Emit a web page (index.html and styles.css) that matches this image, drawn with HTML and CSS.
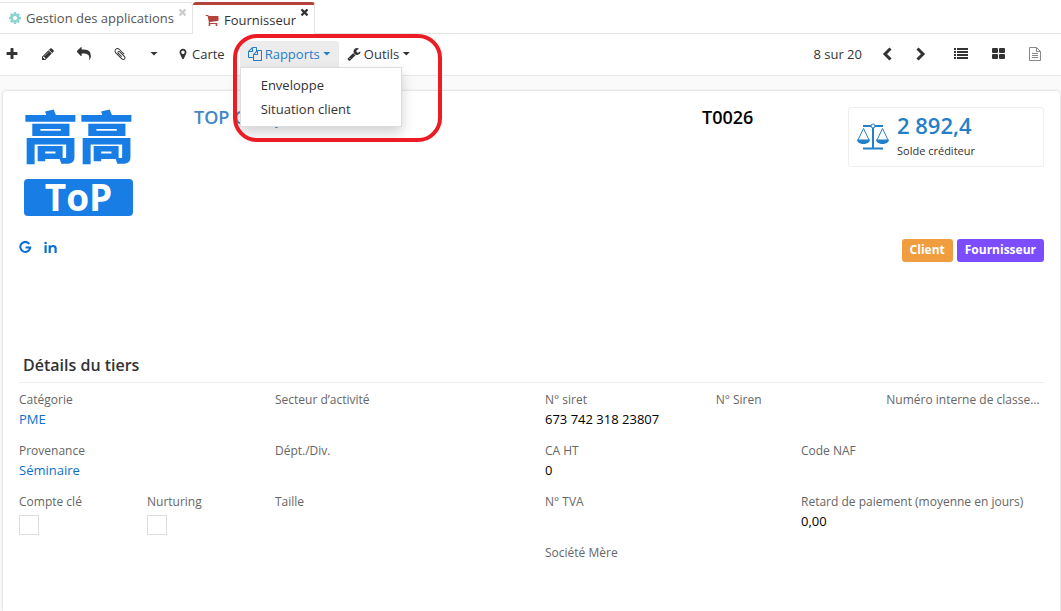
FILE: index.html
```html
<!DOCTYPE html>
<html lang="fr">
<head>
<meta charset="utf-8">
<title>Fournisseur</title>
<link rel="stylesheet" href="styles.css">
</head>
<body>
<svg class="sprite" aria-hidden="true">
  <symbol id="i-cog" viewBox="0 0 1792 1792"><path d="M1152 896q0-106-75-181t-181-75-181 75-75 181 75 181 181 75 181-75 75-181zm512-109v222q0 12-8 23t-20 13l-185 28q-19 54-39 91 35 50 107 138 10 12 10 25t-9 23q-27 37-99 108t-94 71q-12 0-26-9l-138-108q-44 23-91 38-16 136-29 186-7 28-36 28h-222q-14 0-24.500-8.500t-11.500-21.500l-28-184q-49-16-90-37l-141 107q-10 9-25 9-14 0-25-11-126-114-165-168-7-10-7-23 0-12 8-23 15-21 51-66.500t54-70.500q-27-50-41-99l-183-27q-13-2-21-12.500t-8-23.500v-222q0-12 8-23t19-13l186-28q14-46 39-92-40-57-107-138-10-12-10-24 0-10 9-23 26-36 98.500-107.500t94.500-71.500q13 0 26 10l138 107q44-23 91-38 16-136 29-186 7-28 36-28h222q14 0 24.500 8.500t11.500 21.500l28 184q49 16 90 37l142-107q9-9 24-9 13 0 25 10 129 119 165 170 7 8 7 22 0 12-8 23-15 21-51 66.500t-54 70.500q26 50 41 98l183 28q13 2 21 12.500t8 23.500z"/></symbol>
  <symbol id="i-cart" viewBox="0 0 1792 1792"><path d="M704 1536q0 52-38 90t-90 38-90-38-38-90 38-90 90-38 90 38 38 90zm896 0q0 52-38 90t-90 38-90-38-38-90 38-90 90-38 90 38 38 90zm128-1088v512q0 24-16.500 42.500t-40.500 21.500l-1044 122q13 60 13 70 0 16-24 64h920q26 0 45 19t19 45-19 45-45 19h-1024q-26 0-45-19t-19-45q0-11 8-31.500t16-36 21.500-40 15.500-29.500l-177-823h-204q-26 0-45-19t-19-45 19-45 45-19h256q16 0 28.500 6.500t19.500 15.500 13 24.500 8 26 5.500 29.500 4.500 26h1201q26 0 45 19t19 45z"/></symbol>
  <symbol id="i-times" viewBox="0 0 1792 1792"><path d="M1490 1322q0 40-28 68l-136 136q-28 28-68 28t-68-28l-294-294-294 294q-28 28-68 28t-68-28l-136-136q-28-28-28-68t28-68l294-294-294-294q-28-28-28-68t28-68l136-136q28-28 68-28t68 28l294 294 294-294q28-28 68-28t68 28l136 136q28 28 28 68t-28 68l-294 294 294 294q28 28 28 68z"/></symbol>
  <symbol id="i-plus" viewBox="0 0 1792 1792"><path d="M1600 736v192q0 40-28 68t-68 28h-416v416q0 40-28 68t-68 28h-192q-40 0-68-28t-28-68v-416h-416q-40 0-68-28t-28-68v-192q0-40 28-68t68-28h416v-416q0-40 28-68t68-28h192q40 0 68 28t28 68v416h416q40 0 68 28t28 68z"/></symbol>
  <symbol id="i-pencil" viewBox="0 0 1792 1792"><path d="M491 1536l91-91-235-235-91 91v107h128v128h107zm523-928q0-22-22-22-10 0-17 7l-542 542q-7 7-7 17 0 22 22 22 10 0 17-7l542-542q7-7 7-17zm-54-192l416 416-832 832h-416v-416zm683 96q0 53-37 90l-166 166-416-416 166-165q36-38 90-38 53 0 91 38l235 234q37 39 37 91z"/></symbol>
  <symbol id="i-reply" viewBox="0 0 1792 1792"><path d="M1792 1120q0 166-127 451-3 7-10.500 24t-13.500 30-13 22q-12 17-28 17-15 0-23.500-10t-8.500-25q0-9 2.500-26.500t2.500-23.500q5-68 5-123 0-112-19.500-200.500t-54-153.500-89-112-116-77-143.500-48-161-22.500-180-6.500h-224v256q0 26-19 45t-45 19-45-19l-512-512q-19-19-19-45t19-45l512-512q19-19 45-19t45 19 19 45v256h224q713 0 875 403 53 134 53 333z"/></symbol>
  <symbol id="i-clip" viewBox="0 0 1792 1792"><path d="M1596 1385q0 117-79 196t-196 79q-135 0-235-100l-777-776q-113-115-113-271 0-159 110-270t269-111q158 0 273 113l605 606q10 10 10 22 0 16-30.500 46.500t-46.500 30.500q-13 0-23-10l-606-607q-79-77-181-77-106 0-179 75t-73 181q0 105 76 181l776 777q63 63 145 63 64 0 106-42t42-106q0-82-63-145l-581-581q-26-24-60-24-29 0-48 19t-19 48q0 32 25 59l410 410q10 10 10 22 0 16-31 47t-47 31q-12 0-22-10l-410-410q-63-61-63-149 0-82 57-139t139-57q88 0 149 63l581 581q100 98 100 235z"/></symbol>
  <symbol id="i-marker" viewBox="0 0 1792 1792"><path d="M1152 640q0-106-75-181t-181-75-181 75-75 181 75 181 181 75 181-75 75-181zm256 0q0 109-33 179l-364 774q-16 33-47.500 52t-67.500 19-67.500-19-46.500-52l-365-774q-33-70-33-179 0-212 150-362t362-150 362 150 150 362z"/></symbol>
  <symbol id="i-files" viewBox="0 0 1792 1792"><path d="M1696 384q40 0 68 28t28 68v1216q0 40-28 68t-68 28h-960q-40 0-68-28t-28-68v-288h-544q-40 0-68-28t-28-68v-672q0-40 20-88t48-76l408-408q28-28 76-48t88-20h416q40 0 68 28t28 68v328q68-40 128-40h416zm-544 213l-299 299h299v-299zm-640-384l-299 299h299v-299zm196 647l316-316v-416h-384v416q0 40-28 68t-68 28h-416v640h512v-256q0-40 20-88t48-76zm956 804v-1152h-384v416q0 40-28 68t-68 28h-416v640h896z"/></symbol>
  <symbol id="i-wrench" viewBox="0 0 1792 1792"><path d="M448 1472q0-26-19-45t-45-19-45 19-19 45 19 45 45 19 45-19 19-45zm644-420l-682 682q-37 37-90 37-52 0-91-37l-106-108q-38-36-38-90 0-53 38-91l681-681q39 98 114.500 173.500t173.500 114.500zm634-435q0 39-23 106-47 134-164.500 217.500t-258.500 83.500q-185 0-316.500-131.500t-131.500-316.500 131.500-316.500 316.500-131.500q58 0 121.500 16.500t107.500 46.500q16 11 16 28t-16 28l-293 169v224l193 107q5-3 79-48.500t135.500-81 70.500-35.500q15 0 23.500 10t8.500 25z"/></symbol>
</svg>

<nav class="tabs">
  <div class="tab">
    <svg class="icon cog"><use href="#i-cog"/></svg>
    <a class="tab-link" href="#apps">Gestion des applications</a>
    <button class="tab-close" aria-label="Fermer Gestion des applications"><svg><use href="#i-times"/></svg></button>
  </div>
  <div class="tab active">
    <svg class="icon cart"><use href="#i-cart"/></svg>
    <a class="tab-link" href="#supplier">Fournisseur</a>
    <button class="tab-close" aria-label="Fermer Fournisseur"><svg><use href="#i-times"/></svg></button>
  </div>
</nav>

<header class="toolbar">
  <div class="tools">
    <button class="tool" aria-label="Nouveau"><svg class="icon"><use href="#i-plus"/></svg></button>
    <button class="tool" aria-label="Modifier"><svg class="icon"><use href="#i-pencil"/></svg></button>
    <button class="tool" aria-label="Retour"><svg class="icon"><use href="#i-reply"/></svg></button>
    <button class="tool" aria-label="Pièces jointes"><svg class="icon"><use href="#i-clip"/></svg></button>
    <button class="tool" aria-label="Plus"><span class="caret"></span></button>
  </div>
  <div class="actions">
    <button class="action"><svg class="icon marker"><use href="#i-marker"/></svg>Carte</button>
    <div class="dropdown">
      <button class="action open" aria-expanded="true"><svg class="icon"><use href="#i-files"/></svg>Rapports<span class="caret"></span></button>
      <div class="menu">
        <a href="#enveloppe">Enveloppe</a>
        <a href="#situation">Situation client</a>
      </div>
      <div class="highlight"></div>
    </div>
    <button class="action"><svg class="icon"><use href="#i-wrench"/></svg>Outils<span class="caret"></span></button>
  </div>
  <div class="pager">
    <span class="count">8 sur 20</span>
    <button class="nav" aria-label="Précédent"><svg width="14" height="14" viewBox="0 0 14 14"><path class="chevron" d="M9.500 1.500 4 7l5.500 5.500"/></svg></button>
    <button class="nav" aria-label="Suivant"><svg width="14" height="14" viewBox="0 0 14 14"><path class="chevron" d="M3.500 1.500 9 7l-5.500 5.500"/></svg></button>
  </div>
  <div class="views">
    <button class="nav" aria-label="Liste"><svg width="14" height="14" viewBox="0 0 14 14"><path d="M0 1h2v2H0zM3 1h11v2H3zM0 4h2v2H0zM3 4h11v2H3zM0 7h2v2H0zM3 7h11v2H3zM0 10h2v2H0zM3 10h11v2H3z"/></svg></button>
    <button class="nav" aria-label="Cartes"><svg width="14" height="14" viewBox="0 0 14 14"><rect x="1" y="1" width="6" height="5" rx="1"/><rect x="8" y="1" width="6" height="5" rx="1"/><rect x="1" y="7" width="6" height="5" rx="1"/><rect x="8" y="7" width="6" height="5" rx="1"/></svg></button>
    <button class="nav muted" aria-label="Formulaire"><svg width="14" height="14" viewBox="0 0 14 14"><path class="line" d="M1.500.5h7l4 4v9h-11zM8.500.5v4h4M4 6.500h6M4 8.500h6M4 10.500h6"/></svg></button>
  </div>
</header>

<main class="page">
  <section class="sheet">
    <div class="summary">
      <div class="logo">
        <div class="logo-han" lang="zh">高高</div>
        <div class="logo-top">ToP</div>
      </div>
      <a class="company" href="#company">TOP Comp</a>
      <div class="code">T0026</div>
      <div class="balance">
        <svg class="scales" viewBox="0 0 32 28"><path class="thin" d="M6.500 5.500 1 17M6.500 5.500 12 17M25.500 5.500 20 17M25.500 5.500 31 17"/><path class="beam" d="M6 3h20M16 4v21M6 25.500h20"/><circle class="pivot" cx="16" cy="3" r="2"/><path d="M0 16.500h13c0 6-13 6-13 0zM19 16.500h13c0 6-13 6-13 0z"/></svg>
        <div>
          <div class="amount">2 892,4</div>
          <div class="caption">Solde créditeur</div>
        </div>
      </div>
    </div>
    <div class="meta">
      <div class="social">
        <a href="#google" aria-label="Google"><svg width="13" height="13" viewBox="0 0 13 13"><path class="google" d="M10.300 2.900A5 5 0 1 0 11.300 6.400H6.500"/></svg></a>
        <a href="#linkedin" aria-label="LinkedIn"><svg width="13" height="13" viewBox="0 0 13 13"><circle cx="1.600" cy="2" r="1.300"/><path d="M.5 4.300h2.200V12H.5zM4.600 4.300h2.100v1c1.300-2 6-1.700 6 2V12h-2.200V8c0-2.700-3.700-2.500-3.700 0v4H4.600z"/></svg></a>
      </div>
      <div class="tags"><span class="tag orange">Client</span><span class="tag violet">Fournisseur</span></div>
    </div>
    <h2>Détails du tiers</h2>
    <div class="details">
      <div class="fields left">
        <div class="field half"><span>Catégorie</span><a href="#pme">PME</a></div>
        <div class="field half"><span>Secteur d’activité</span></div>
        <div class="field half"><span>Provenance</span><a href="#seminaire">Séminaire</a></div>
        <div class="field half"><span>Dépt./Div.</span></div>
        <div class="field"><label for="key">Compte clé</label><input type="checkbox" id="key"></div>
        <div class="field"><label for="nurturing">Nurturing</label><input type="checkbox" id="nurturing"></div>
        <div class="field half"><span>Taille</span></div>
      </div>
      <div class="fields right">
        <div class="field third"><span>N° siret</span><b>673 742 318 23807</b></div>
        <div class="field third"><span>N° Siren</span></div>
        <div class="field third"><span>Numéro interne de classement</span></div>
        <div class="field half"><span>CA HT</span><b>0</b></div>
        <div class="field half"><span>Code NAF</span></div>
        <div class="field half"><span>N° TVA</span></div>
        <div class="field half"><span>Retard de paiement (moyenne en jours)</span><b>0,00</b></div>
        <div class="field half"><span>Société Mère</span></div>
      </div>
    </div>
  </section>
</main>
</body>
</html>
```
FILE: styles.css
```css
* { box-sizing: border-box; }
body {
  margin: 0;
  min-height: 100vh;
  display: flex;
  flex-direction: column;
  background: #fafafa;
  color: #333;
  font: 13px/20px "Open Sans", "Noto Sans", sans-serif;
}
a { color: #0a6fd0; text-decoration: none; }
button { margin: 0; padding: 0; border: 0; background: none; color: inherit; font: inherit; }
svg { display: block; fill: currentColor; }
.sprite { position: absolute; width: 0; height: 0; }
.icon { width: 14px; height: 14px; flex: none; }

.tabs {
  display: flex;
  align-items: flex-end;
  height: 34px;
  background: #fff;
  border-bottom: 1px solid #e4e4e4;
}
.tab {
  display: flex;
  align-items: center;
  height: 31px;
  padding: 0 4px 0 8px;
  border: solid #e4e4e4;
  border-width: 1px 1px 0 0;
  border-radius: 0 3px 0 0;
}
.tab-link { margin: 0 3px 0 4px; color: #555; }
.tab.active {
  height: 32px;
  margin-bottom: -1px;
  padding-left: 12px;
  background: #fff;
  border-top: 3px solid #b5433b;
  border-radius: 3px 3px 0 0;
}
.active .tab-link { margin-left: 5px; color: #333; }
.tab-close { align-self: flex-start; padding-top: 2px; color: #ccc; }
.active .tab-close { padding-top: 0; color: #333; }
.tab-close svg { width: 11px; height: 14px; }
.cog { color: #8dd3cf; }
.cart { color: #b5433b; }

.toolbar {
  display: flex;
  align-items: center;
  height: 42px;
  padding: 0 19px 2px 5px;
  background: #fff;
  border-bottom: 1px solid #e8e8e8;
}
.tools { display: flex; gap: 22px; }
.tool { display: flex; align-items: center; justify-content: center; min-width: 14px; height: 26px; }
.tool:last-child { min-width: 10px; }
.caret {
  width: 8px;
  height: 4px;
  background: currentColor;
  clip-path: polygon(0 0, 100% 0, 50% 100%);
}
.actions { display: flex; margin-left: 10px; }
.action { display: flex; align-items: center; gap: 3px; height: 26px; padding: 0 8px; }
.marker { width: 12px; }
.open { background: #ececec; color: #237fc8; border-radius: 3px 3px 0 0; }
.dropdown { position: relative; margin-left: 7px; }
.menu {
  position: absolute;
  z-index: 2;
  top: 100%;
  left: 0;
  width: 162px;
  padding: 5px 0;
  background: #fff;
  border: 1px solid #ddd;
  box-shadow: 0 6px 12px rgba(0, 0, 0, .18);
}
.menu a { display: block; padding: 2px 20px; color: #333; }
.highlight {
  position: absolute;
  z-index: 3;
  top: -7px;
  left: -7px;
  width: 209px;
  height: 108px;
  border: 4px solid #ec1c24;
  border-radius: 24px;
  pointer-events: none;
}
.pager { display: flex; align-items: center; gap: 19px; margin-left: auto; }
.views { display: flex; gap: 23px; margin-left: 26px; }
.nav { color: #333; }
.chevron { fill: none; stroke: currentColor; stroke-width: 3; }
.muted { color: #888; }
.line { fill: none; stroke: currentColor; }

.page { flex: 1; display: flex; padding: 15px 1px 0 3px; }
.sheet {
  flex: 1;
  min-width: 0;
  background: #fff;
  border-radius: 4px 4px 0 0;
  box-shadow: 0 0 3px rgba(0, 0, 0, .2);
}
.summary {
  display: grid;
  grid-template-columns: 175fr 508fr 146fr 196fr;
  align-items: start;
  padding: 16px 16px 0;
}
.logo { width: 118px; padding: 0 4px 0 5px; color: #187de4; }
.logo-han {
  display: flex;
  justify-content: center;
  font: 900 56px/54px "Noto Sans CJK SC", sans-serif;
  white-space: nowrap;
}
.logo-top {
  margin-top: 18px;
  padding-bottom: 2px;
  border-radius: 4px;
  background: #187de4;
  color: #fff;
  font-size: 37px;
  font-weight: 700;
  line-height: 35px;
  text-align: center;
}
.company, .code { font-size: 18px; font-weight: 600; }
.company { color: #4286c5; }
.code { color: #000; }
.balance {
  display: flex;
  align-items: center;
  gap: 8px;
  height: 60px;
  padding: 0 8px;
  border: 1px solid #eee;
  border-radius: 3px;
}
.scales { width: 32px; height: 28px; color: #237fc8; }
.thin, .beam, .pivot { fill: none; stroke: currentColor; }
.beam { stroke-width: 2; }
.pivot { fill: #fff; }
.amount { padding-bottom: 4px; color: #237fc8; font-size: 22px; font-weight: 600; line-height: 24px; }
.caption { font-size: 11px; }
.meta { display: flex; justify-content: space-between; align-items: flex-start; padding: 23px 16px 0; }
.social { display: flex; gap: 12px; padding-top: 2px; }
.google { fill: none; stroke: currentColor; stroke-width: 2; }
.tags { display: flex; gap: 4px; }
.tag { padding: 0 8px 1px; border-radius: 3px; color: #fff; font-size: 12px; font-weight: 700; line-height: 22px; }
.orange { background: #f09d40; }
.violet { background: #7c4dff; }
h2 {
  margin: 90px 16px 0;
  padding: 0 4px 4px;
  border-bottom: 1px solid #eee;
  font-size: 16px;
  font-weight: 600;
  line-height: 26px;
}
.details { display: grid; grid-template-columns: 1fr 1fr; gap: 14px; padding: 7px 3px 0 16px; }
.fields { display: grid; align-content: start; row-gap: 11px; }
.left { grid-template-columns: repeat(4, 1fr); }
.right { grid-template-columns: repeat(6, 1fr); }
.field { min-width: 0; height: 40px; padding-right: 16px; }
.field span, .field label, .field a, .field b { display: block; }
.field span, .field label { overflow: hidden; color: #666; font-size: 12px; text-overflow: ellipsis; white-space: nowrap; }
.field a, .field b { line-height: 18px; }
.field b { color: #000; font-weight: 400; }
.left .half { grid-column: span 2; }
.right .half { grid-column: span 3; }
.third { grid-column: span 2; }
input[type="checkbox"] {
  display: block;
  width: 20px;
  height: 20px;
  margin: 3px 0 0;
  appearance: none;
  background: #fff;
  border: 1px solid #ddd;
}
```
